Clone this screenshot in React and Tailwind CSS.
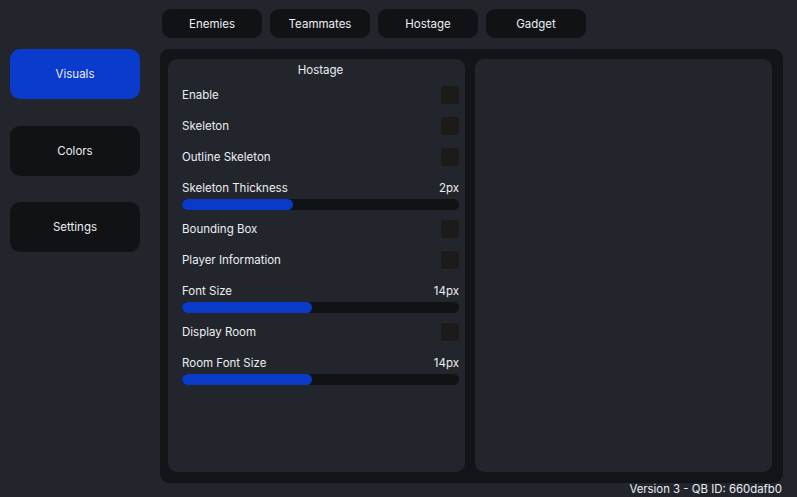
import React from "react";

const font = { fontFamily: "Inter, 'Noto Sans', sans-serif" };

function Toggle({ label }) {
  return (
    <div className="h-[31px] flex items-center justify-between">
      <span className="pt-[2px]">{label}</span>
      <div className="w-[18px] h-[18px] rounded-[3px] bg-[#1c1b1a]" />
    </div>
  );
}

function Slider({ label, value, pct }) {
  return (
    <div className="flex flex-col h-[41px]">
      <div className="h-[26px] pt-[7px] flex items-center justify-between">
        <span>{label}</span>
        <span>{value}</span>
      </div>
      <div className="h-[11px] rounded-full bg-[#111214] overflow-hidden">
        <div className="h-full rounded-full bg-[#0a3bc8]" style={{ width: pct }} />
      </div>
    </div>
  );
}

export default function App() {
  const tabs = ["Enemies", "Teammates", "Hostage", "Gadget"];
  return (
    <div
      className="w-[797px] h-[497px] bg-[#22252c] text-[#eceef2] text-[11.5px] flex flex-col overflow-hidden"
      style={font}
    >
      <div className="flex gap-[8px] pl-[162px] pt-[9px]">
        {tabs.map((t) => (
          <div
            key={t}
            className="w-[100px] h-[29px] pt-[2px] rounded-[9px] bg-[#111216] flex items-center justify-center"
          >
            {t}
          </div>
        ))}
      </div>
      <div className="flex mt-[11px] pl-[10px]">
        <div className="w-[130px] flex flex-col">
          <div className="h-[50px] pt-[2px] rounded-[10px] bg-[#0a3bcc] flex items-center justify-center">
            Visuals
          </div>
          <div className="mt-[27px] h-[50px] pt-[2px] rounded-[10px] bg-[#111216] flex items-center justify-center">
            Colors
          </div>
          <div className="mt-[26px] h-[50px] pt-[2px] rounded-[10px] bg-[#111216] flex items-center justify-center">
            Settings
          </div>
        </div>
        <div className="ml-[20px] w-[623px] h-[434px] rounded-[9px] bg-[#131417] pl-[8px] pr-[11px] pt-[10px] pb-[11px] flex gap-[10px]">
          <div className="w-[297px] rounded-[9px] bg-[#22252c] pl-[14px] pr-[6px] flex flex-col">
            <div className="h-[20.5px] pt-[3px] flex items-center justify-center">
              <span>Hostage</span>
            </div>
            <Toggle label="Enable" />
            <Toggle label="Skeleton" />
            <Toggle label="Outline Skeleton" />
            <Slider label="Skeleton Thickness" value="2px" pct="40%" />
            <Toggle label="Bounding Box" />
            <Toggle label="Player Information" />
            <Slider label="Font Size" value="14px" pct="47%" />
            <Toggle label="Display Room" />
            <Slider label="Room Font Size" value="14px" pct="47%" />
          </div>
          <div className="w-[297px] rounded-[9px] bg-[#22252c]" />
        </div>
      </div>
      <div className="flex justify-end pr-[15px] text-[11.4px] leading-[13px]">
        Version 3 - QB ID: 660dafb0
      </div>
    </div>
  );
}
